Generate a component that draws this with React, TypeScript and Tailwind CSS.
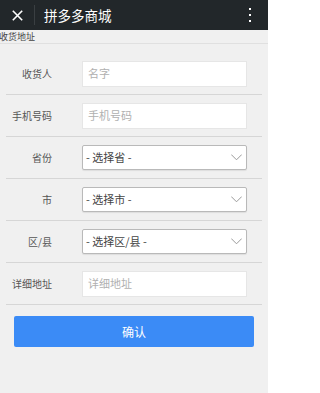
import React from "react";

const font = { fontFamily: '"Noto Sans CJK SC", "Noto Sans", sans-serif' };

function Chevron() {
  return (
    <svg className="w-[11px] h-[7px] shrink-0" viewBox="0 0 11 7" fill="none" stroke="#9a9a9a" strokeWidth="1">
      <path d="M0.5 0.8L5.5 5.8L10.5 0.8" strokeLinecap="round" strokeLinejoin="round" />
    </svg>
  );
}

function Row({ label, children }: { label: string; children: React.ReactNode }) {
  return (
    <div className="mx-[6px] h-[42px] flex items-center border-b border-[#d6d6d6]">
      <div className="w-[46px] text-right text-[10px] text-[#555] shrink-0">{label}</div>
      <div className="ml-[30px] w-[165px]">{children}</div>
    </div>
  );
}

function TextField({ placeholder }: { placeholder: string }) {
  return (
    <div className="h-[26px] bg-white border border-[#e6e6e6] flex items-center px-[5px] text-[11px] text-[#b0b0b0]">
      {placeholder}
    </div>
  );
}

function SelectField({ value }: { value: string }) {
  return (
    <div className="h-[25px] bg-white border border-[#b9b9b9] rounded-[2px] shadow-[0_1px_1px_rgba(0,0,0,0.08)] flex items-center justify-between pl-[3px] pr-[4px] text-[11px] text-[#444]">
      <span>{value}</span>
      <Chevron />
    </div>
  );
}

export default function App() {
  return (
    <div className="w-[268px] h-[393px] bg-[#f0f0f0] overflow-hidden" style={font}>
      <div className="h-[30px] bg-[#22272a] flex items-center">
        <svg className="ml-[12px] w-[11px] h-[11px]" viewBox="0 0 11 11" stroke="white" strokeWidth="1.6">
          <path d="M0.8 0.8L10.2 10.2M10.2 0.8L0.8 10.2" />
        </svg>
        <div className="ml-[11px] w-px h-[20px] bg-[#3a3f42]" />
        <div className="ml-[9px] text-[13.5px] text-white">拼多多商城</div>
        <div className="ml-auto mr-[17px] flex flex-col gap-[4px]">
          <div className="w-[2px] h-[2px] bg-white" />
          <div className="w-[2px] h-[2px] bg-white" />
          <div className="w-[2px] h-[2px] bg-white" />
        </div>
      </div>
      <div className="h-[14px] leading-[14px] text-[9px] text-[#444] -ml-[1px] border-b border-[#e0e0e0]">
        收货地址
      </div>
      <div className="pt-[9px]">
        <Row label="收货人">
          <TextField placeholder="名字" />
        </Row>
        <Row label="手机号码">
          <TextField placeholder="手机号码" />
        </Row>
        <Row label="省份">
          <SelectField value="- 选择省 -" />
        </Row>
        <Row label="市">
          <SelectField value="- 选择市 -" />
        </Row>
        <Row label="区/县">
          <SelectField value="- 选择区/县 -" />
        </Row>
        <Row label="详细地址">
          <TextField placeholder="详细地址" />
        </Row>
      </div>
      <div className="mx-[14px] mt-[11px] h-[31px] bg-[#3b8bf6] rounded-[2px] flex items-center justify-center text-white text-[12px]">
        确认
      </div>
    </div>
  );
}
